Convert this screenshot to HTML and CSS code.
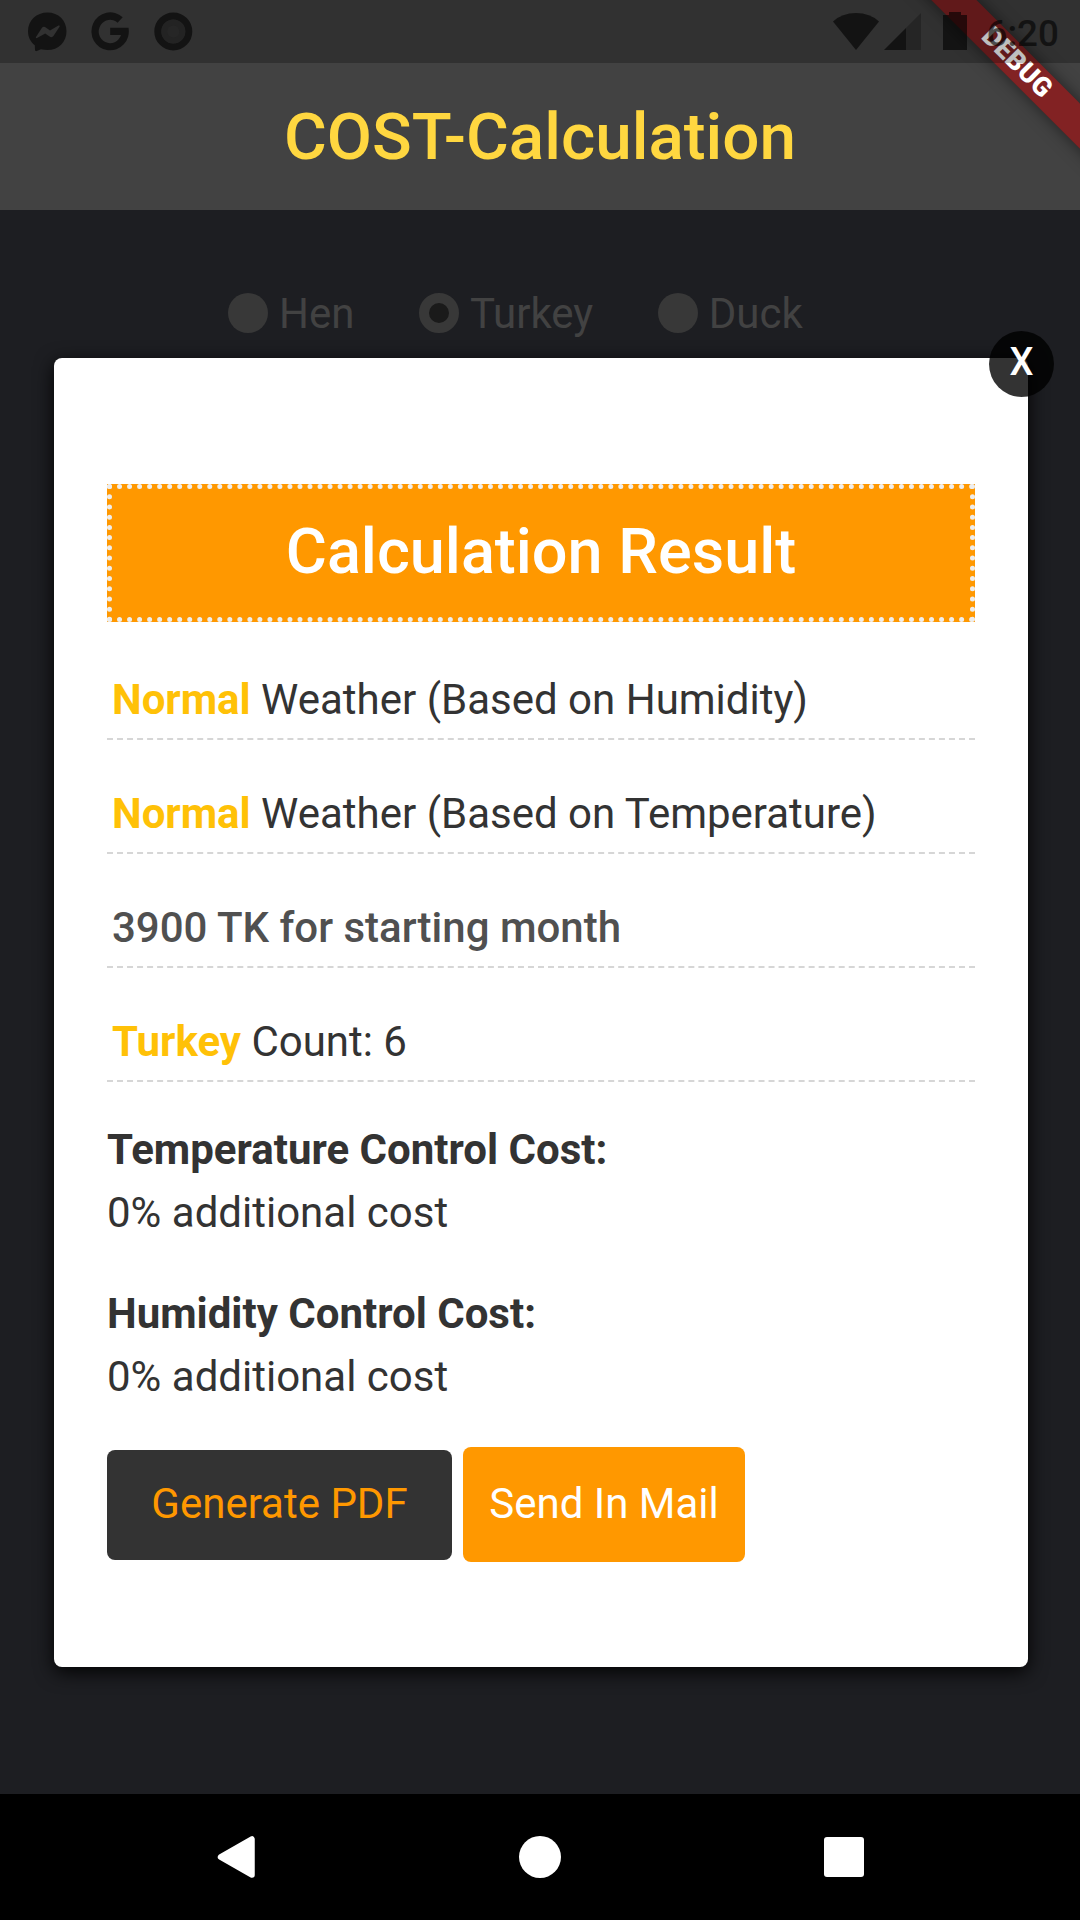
FILE: index.html
```html
<!DOCTYPE html>
<html lang="en">
<head>
<meta charset="utf-8">
<title>COST-Calculation</title>
<link rel="stylesheet" href="styles.css">
</head>
<body>
<div class="screen">
  <header class="app-bar"><h1 class="app-title">COST-Calculation</h1></header>
  <main class="page">
    <div class="radios">
      <span class="radio"><i class="dot"></i><span>Hen</span></span>
      <span class="radio"><i class="dot selected"></i><span>Turkey</span></span>
      <span class="radio"><i class="dot"></i><span>Duck</span></span>
    </div>
    <section class="modal">
      <button class="close">X</button>
      <h2 class="banner">Calculation Result</h2>
      <p class="row"><b>Normal</b> Weather (Based on Humidity)</p>
      <p class="row"><b>Normal</b> Weather (Based on Temperature)</p>
      <p class="row amount">3900 TK for starting month</p>
      <p class="row"><b>Turkey</b> Count: 6</p>
      <h3 class="cost-title">Temperature Control Cost:</h3>
      <p class="cost">0% additional cost</p>
      <h3 class="cost-title second">Humidity Control Cost:</h3>
      <p class="cost">0% additional cost</p>
      <div class="actions">
        <button class="btn pdf">Generate PDF</button>
        <button class="btn mail">Send In Mail</button>
      </div>
    </section>
  </main>
  <nav class="nav-bar">
    <svg class="nav-icon" viewBox="0 0 42 42"><path d="M37 3v36L5.500 21z" fill="#fff" stroke="#fff" stroke-width="5.500" stroke-linejoin="round"/></svg>
    <svg class="nav-icon" viewBox="0 0 42 42"><circle cx="21" cy="21" r="21" fill="#fff"/></svg>
    <svg class="nav-icon" viewBox="0 0 42 42"><rect x="1" y="1" width="40" height="40" rx="3" fill="#fff"/></svg>
  </nav>
  <div class="debug-corner"><div class="debug-band">DEBUG</div></div>
  <div class="status-bar">
    <svg class="status-icons" viewBox="0 0 260 63" width="260" height="63">
      <path fill-rule="evenodd" d="M47.500 12.500C36.500 12.500 28 20.500 28 31.200C28 37 30.500 41.800 34.800 45.200L35 50C35 51 36 51.400 36.800 51L41 49.200C43 49.800 45.200 50 47.500 50C58.500 50 66.500 42 66.500 31.200C66.500 20.500 58.500 12.500 47.500 12.500ZM36 37L41.800 28C42.700 26.600 44.500 26.400 45.800 27.400L50 30.500L58.500 25.600C59.300 25.200 60 26 59.500 26.700L53.600 35.800C52.700 37.200 51 37.600 49.600 36.500L45.200 33.400L37 38.100C36.100 38.500 35.500 37.800 36 37Z"/>
      <path d="M122.700 17.300A18.700 19 0 1 0 128.500 27.800H110.200V35H121A11.400 11.700 0 1 1 117.600 22.700Z"/>
      <circle cx="173.300" cy="31.400" r="15.500" fill="none" stroke="#000" stroke-width="7"/>
      <circle cx="173.300" cy="31.400" r="12" opacity=".45"/>
      <circle cx="173.300" cy="31.400" r="6" fill="#444" opacity=".15"/>
    </svg>
    <svg class="status-icons" viewBox="830 0 250 63" width="250" height="63">
      <path d="M833 21.500Q842 13 856 13T879 21.500L856 50Z"/>
      <path d="M884 50L906 28V50Z"/>
      <path d="M906 28L921 13V50H906Z" opacity=".38"/>
      <path d="M943 15H949V12H961V15H967V50H943Z"/>
      <text x="986.500" y="46" class="clock">6:20</text>
    </svg>
  </div>
</div>
</body>
</html>
```
FILE: styles.css
```css
* { box-sizing: border-box; margin: 0; padding: 0; }

body {
  width: 1080px;
  height: 1920px;
  overflow: hidden;
  font-family: Roboto, "Liberation Sans", sans-serif;
  font-size: 42px;
  color: #333;
}

button { border: 0; font: inherit; }

.screen {
  position: relative;
  display: flex;
  flex-direction: column;
  height: 1920px;
  overflow: hidden;
  background: #1d1e22;
}

.app-bar {
  height: 210px;
  padding-top: 63px;
  display: flex;
  align-items: center;
  justify-content: center;
  background: #424242;
}

.app-title { font-size: 65.600px; font-weight: 500; line-height: 74px; color: #ffd740; }

.page { flex: 1; }

.radios { display: flex; height: 148px; padding: 80px 0 0 228px; color: #424242; }
.radio { display: flex; gap: 11px; height: 46px; align-items: center; }
.radio + .radio { margin-left: 64.500px; }
.dot { width: 40px; height: 40px; border-radius: 50%; background: #383838; }
.dot.selected { border: 10px solid #383838; background: #1a1a1a; }

.modal {
  position: relative;
  width: 974px;
  height: 1309px;
  margin-left: 54px;
  padding: 126px 53px 0;
  border-radius: 8px;
  background: #fff;
  box-shadow: 0 5px 19px rgba(0, 0, 0, .95);
}

.close {
  position: absolute;
  top: -27px;
  right: -26px;
  width: 65px;
  height: 66px;
  padding-bottom: 5px;
  border-radius: 50%;
  background: rgba(0, 0, 0, .8);
  color: #fff;
  font-size: 38px;
  font-weight: 500;
}

.banner {
  display: flex;
  align-items: center;
  justify-content: center;
  height: 138px;
  margin-bottom: 4px;
  padding-bottom: 4px;
  border: 5px dotted #eee;
  background: #ff9800;
  color: #fff;
  font-size: 63px;
  font-weight: 500;
}

.row {
  height: 114px;
  padding: 48px 0 0 5px;
  border-bottom: 2px dashed #d6d6d6;
  line-height: 52px;
}
.row b { font-weight: 700; color: #ffc107; }
.amount { font-weight: 500; color: #505050; }

.cost-title { margin-top: 36px; font-size: 42px; font-weight: 700; line-height: 63px; }
.cost-title.second { margin-top: 38px; }
.cost { line-height: 63px; }

.actions { display: flex; align-items: center; gap: 11px; margin-top: 39px; }
.btn { padding-bottom: 2px; border-radius: 8px; }
.pdf { width: 345px; height: 110px; background: #333; color: #ff9800; }
.mail { width: 282px; height: 115px; background: #ff9800; color: #fff; }

.nav-bar {
  display: flex;
  justify-content: center;
  gap: 262px;
  height: 126px;
  padding-top: 42px;
  background: #000;
}
.nav-icon { width: 42px; height: 42px; }

.debug-corner {
  position: absolute;
  top: 0;
  right: 0;
  width: 260px;
  height: 260px;
  overflow: hidden;
}
.debug-band {
  position: absolute;
  left: 47px;
  top: 46.500px;
  width: 300px;
  height: 31.500px;
  transform: rotate(45deg);
  background: #822223;
  box-shadow: 0 0 16px rgba(0, 0, 0, .5);
  color: #fff;
  font-size: 26.800px;
  font-weight: 900;
  letter-spacing: .3px;
  line-height: 31.500px;
  text-align: center;
}

.status-bar {
  position: absolute;
  inset: 0 0 auto;
  display: flex;
  justify-content: space-between;
  height: 63px;
  background: rgba(0, 0, 0, .25);
}
.status-icons { display: block; opacity: .6; }
.clock { font-size: 36.750px; font-weight: 500; }
```
